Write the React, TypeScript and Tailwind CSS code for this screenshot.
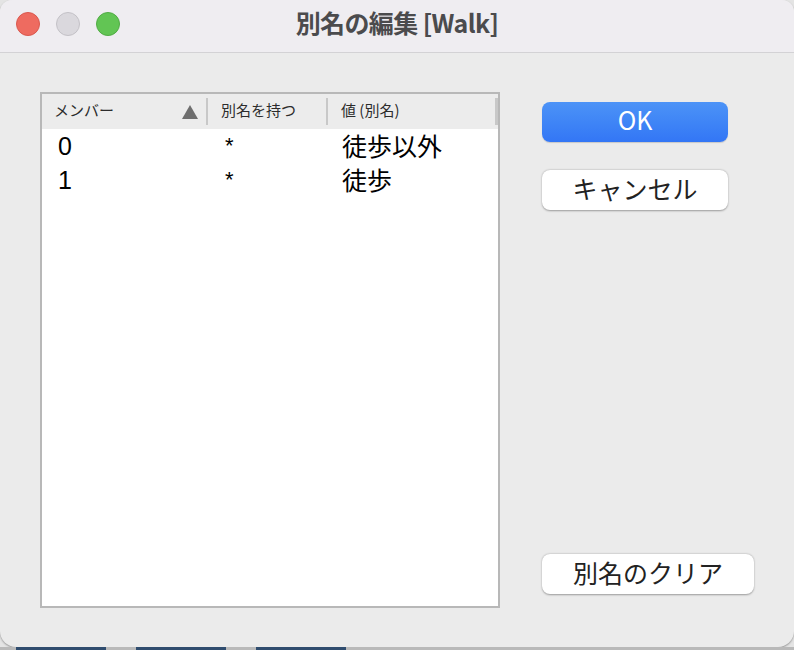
import React from "react"

const jp = { fontFamily: '"Noto Sans CJK JP", "Noto Sans", sans-serif' }

const rows = [
  { member: "0", has: "*", value: "徒歩以外" },
  { member: "1", has: "*", value: "徒歩" },
]

function Light({ className }: { className: string }) {
  return <span className={`block w-[24px] h-[24px] rounded-full border ${className}`} />
}

export default function App() {
  return (
    <div className="w-[794px] h-[650px] bg-[#e4e4e4] flex flex-col overflow-hidden" style={jp}>
      <div className="h-[647px] bg-[#ebebeb] rounded-t-[12px] rounded-b-[16px] flex flex-col overflow-hidden shadow-[0_1px_2px_rgba(0,0,0,0.35)]">
        {/* title bar */}
        <div className="relative h-[53px] shrink-0 bg-[#efedf1] border-b border-[#d3d2d5] flex items-center">
          <div className="flex items-center gap-[16px] pl-[16px] pb-[4px]">
            <Light className="bg-[#ee6b60] border-[#d9584e]" />
            <Light className="bg-[#dad8dd] border-[#c3c1c6]" />
            <Light className="bg-[#62c554] border-[#51ab45]" />
          </div>
          <div className="absolute inset-0 flex items-center justify-center pb-[8px] pointer-events-none">
            <span className="text-[25px] font-bold text-[#4b4b4d] tracking-[-0.6px] leading-none">別名の編集 [Walk]</span>
          </div>
        </div>

        {/* body */}
        <div className="flex items-start pt-[39px] pl-[40px]">
          <div className="w-[460px] h-[516px] border-2 border-[#b8b8b8] bg-white flex flex-col">
            <div className="h-[35px] bg-[#ececec] flex items-center text-[15px] text-[#2c2c2c]">
              <div className="w-[166px] h-[27px] flex items-center justify-between pl-[12px] pr-[8px] border-r-2 border-[#c8c8c8]">
                <span className="pb-[3px]">メンバー</span>
                <svg width="16" height="14" viewBox="0 0 16 14">
                  <polygon points="8,0 16,14 0,14" fill="#6e6e6e" />
                </svg>
              </div>
              <div className="w-[120px] h-[27px] flex items-center pl-[13px] pb-[3px] border-r-2 border-[#c8c8c8]">別名を持つ</div>
              <div className="flex-1 h-[27px] flex items-center pl-[13px] pb-[3px] border-r-[3px] border-[#c8c8c8]">値 (別名)</div>
            </div>
            <div className="flex flex-col">
              {rows.map((r) => (
                <div key={r.member} className="h-[34px] flex items-center text-[25px] text-black leading-none">
                  <div className="w-[166px] pl-[16px] font-['Liberation_Sans',sans-serif]">{r.member}</div>
                  <div className="w-[120px] pl-[17px] text-[22px] font-['Liberation_Sans',sans-serif]">{r.has}</div>
                  <div className="flex-1 pl-[14px] pb-[2px]">{r.value}</div>
                </div>
              ))}
            </div>
          </div>

          <div className="h-[516px] flex flex-col ml-[42px] pt-[10px] pb-[14px]">
            <button className="w-[186px] h-[40px] rounded-[8px] bg-gradient-to-b from-[#4c93f7] to-[#3376f5] text-white text-[25px] leading-none flex items-center justify-center pb-[6px] shadow-[0_1px_1px_rgba(0,0,0,0.15)]">
              OK
            </button>
            <button className="mt-[28px] w-[186px] h-[40px] rounded-[8px] bg-white text-[#222] text-[25px] leading-none flex items-center justify-center pb-[4px] shadow-[0_0.5px_2px_rgba(0,0,0,0.35)]">
              キャンセル
            </button>
            <div className="flex-1" />
            <button className="w-[212px] h-[40px] rounded-[8px] bg-white text-[#222] text-[25px] leading-none flex items-center justify-center pb-[4px] shadow-[0_0.5px_2px_rgba(0,0,0,0.35)]">
              別名のクリア
            </button>
          </div>
        </div>
      </div>

      {/* desktop strip behind the window */}
      <div className="h-[3px] flex bg-[#b9b9b9]">
        <div className="w-[16px]" />
        <div className="w-[90px] bg-[#2f4c6e]" />
        <div className="w-[30px]" />
        <div className="w-[90px] bg-[#2f4c6e]" />
        <div className="w-[30px]" />
        <div className="w-[90px] bg-[#2f4c6e]" />
      </div>
    </div>
  )
}
